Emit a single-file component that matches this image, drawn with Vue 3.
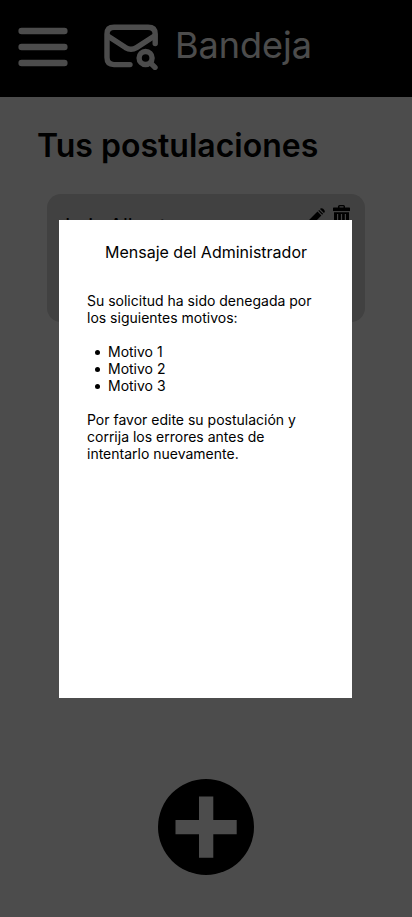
<script setup>
const reasons = ['Motivo 1', 'Motivo 2', 'Motivo 3']
</script>

<template>
  <div class="screen">
    <header class="topbar">
      <svg class="menu" width="50" height="40" viewBox="0 0 50 40">
        <path d="M3.6 4H46.4M3.6 20H46.4M3.6 36H46.4" fill="none" stroke="#fff" stroke-width="6.4" stroke-linecap="round" />
      </svg>
      <svg class="mail" width="56" height="48" viewBox="0 0 56 48">
        <g fill="none" stroke="#fff" stroke-width="5.4" stroke-linecap="round" stroke-linejoin="round">
          <path d="M27 42.600H11Q4 42.600 4 35.600V12Q4 5.300 11 5.300H45Q52.200 5.300 52.200 12V21.500" />
          <path d="M4.800 14L22.500 25.600Q28 29 33.500 25.600L51.400 14" />
          <circle cx="42.600" cy="36" r="6.500" />
          <path d="M47.400 40.800L52 45.400" />
        </g>
      </svg>
      <span class="brand">Bandeja</span>
    </header>

    <main class="content">
      <h1>Tus postulaciones</h1>
      <article class="card">
        <span class="name">Luis Alberto</span>
        <div class="actions">
          <svg width="18" height="18" viewBox="0 0 18 18">
            <path d="M0 18L1.300 12.800L10.500 3.600L14.400 7.500L5.200 16.700ZM11.300 2.800L12.200 1.900L16.100 5.800L15.200 6.700ZM13 1.100L13.500 .6Q14.800 -.4 16.100 .8L17.200 1.900Q18.400 3.200 17.400 4.500L16.900 5Z" />
          </svg>
          <svg width="18" height="20" viewBox="0 0 18 20">
            <path fill-rule="evenodd" d="M.6 2.500H5V1.600Q5 0 6.600 0H10.400Q12 0 12 1.600V2.500H16.400Q17 2.500 17 3.100V6H0V3.100Q0 2.500 .6 2.500ZM6.500 2.500H10.500V1.300H6.500ZM1 7.200H16V18Q16 20 14 20H3Q1 20 1 18ZM4 9V18H5.200V9ZM7.900 9V18H9.100V9ZM11.800 9V18H13V9Z" />
          </svg>
        </div>
      </article>
    </main>

    <button class="add" aria-label="Agregar">
      <svg width="96" height="96" viewBox="0 0 96 96">
        <circle cx="48" cy="48" r="48" />
        <path d="M41 17.500H55.300V41H78.700V55.300H55.300V78.700H41V55.300H17.500V41H41Z" fill="#fff" />
      </svg>
    </button>

    <div class="overlay">
      <section class="dialog" role="dialog">
        <h2>Mensaje del Administrador</h2>
        <div class="message">
          <p>Su solicitud ha sido denegada por<br />los siguientes motivos:</p>
          <ul>
            <li v-for="reason in reasons" :key="reason">{{ reason }}</li>
          </ul>
          <p>Por favor edite su postulación y<br />corrija los errores antes de<br />intentarlo nuevamente.</p>
        </div>
      </section>
    </div>
  </div>
</template>

<style scoped>
.screen {
  position: relative;
  display: flex;
  flex-direction: column;
  width: 412px;
  height: 917px;
  overflow: hidden;
  background: #fff;
  color: #000;
  font-family: Inter, sans-serif;
}
.topbar {
  display: flex;
  flex: none;
  align-items: flex-start;
  box-sizing: border-box;
  height: 97px;
  padding: 22px 0 0 18px;
  background: #000;
  color: #fff;
}
.menu {
  margin-top: 5px;
}
.mail {
  margin-left: 35px;
}
.brand {
  margin-left: 16px;
  font-size: 36px;
  line-height: 46px;
}
.content {
  flex: 1;
  padding: 29px 47px 0;
}
h1 {
  margin: 0 0 28px -10px;
  font-size: 32px;
  font-weight: 600;
  line-height: 40px;
  white-space: nowrap;
}
.card {
  display: flex;
  justify-content: space-between;
  box-sizing: border-box;
  height: 128px;
  padding: 11px 14px 0 18px;
  border-radius: 14px;
  background: #d9d9d9;
}
.name {
  padding-top: 11px;
  font-size: 20px;
  line-height: 20px;
}
.actions {
  display: flex;
  gap: 8px;
}
.actions svg:first-child {
  margin-top: 3px;
}
.add {
  align-self: center;
  flex: none;
  height: 96px;
  margin-bottom: 42px;
  padding: 0;
  border: 0;
  background: none;
}
.add svg {
  display: block;
}
.overlay {
  position: absolute;
  inset: 0;
  display: flex;
  align-items: flex-start;
  justify-content: center;
  box-sizing: border-box;
  padding: 220px 1px 0 0;
  background: rgba(0, 0, 0, 0.7);
}
.dialog {
  box-sizing: border-box;
  width: 293px;
  height: 478px;
  padding: 22px 28px;
  background: #fff;
}
h2 {
  margin: 0 0 30px;
  padding-left: 1px;
  font-size: 16px;
  font-weight: 400;
  line-height: 20px;
  text-align: center;
  white-space: nowrap;
}
.message {
  font-size: 14px;
  line-height: 17px;
  white-space: nowrap;
}
.message p {
  margin: 0;
}
.message ul {
  margin: 17px 0;
  padding: 0;
  list-style: none;
}
.message li {
  display: flex;
  align-items: center;
}
.message li::before {
  content: "";
  width: 5px;
  height: 5px;
  margin: 1px 8px 0;
  border-radius: 50%;
  background: #000;
}
</style>

<style>
body {
  margin: 0;
}
</style>
